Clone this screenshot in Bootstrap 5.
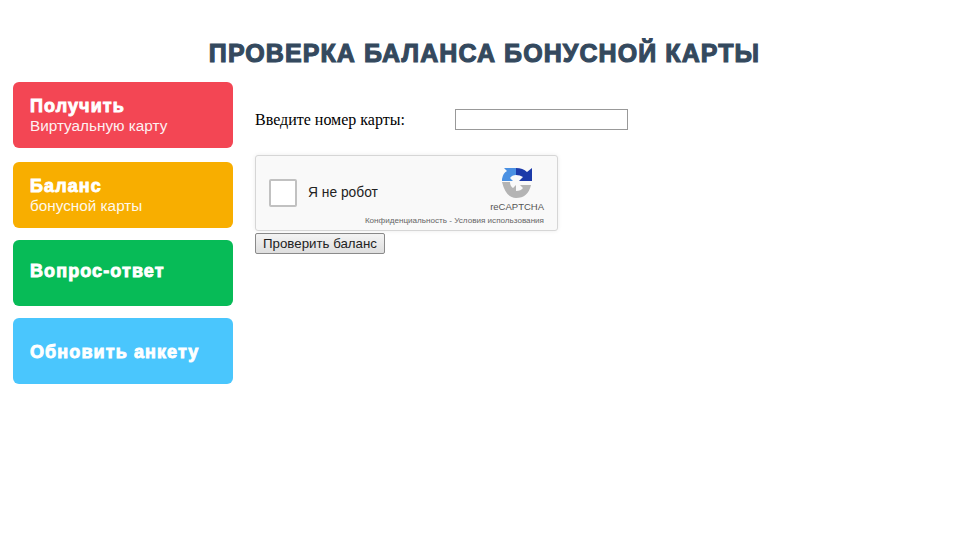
<!DOCTYPE html>
<html lang="ru"><head><meta charset="utf-8"><title>Проверка баланса</title>
<link href="https://cdn.jsdelivr.net/npm/bootstrap@5.3.0/dist/css/bootstrap.min.css" rel="stylesheet">
<style>
body{background:#fff;font-family:"Liberation Serif",serif;color:#000;overflow:hidden}
.page-wrap{padding:0 0 0 13px;height:553px}
.page-title{font-family:"Liberation Sans",sans-serif;font-weight:700;font-size:25px;line-height:28px;letter-spacing:1.08px;color:#34495e;-webkit-text-stroke:1.1px #34495e;text-align:center;margin:0;padding:39px 0 15px;width:943px}
.side-col{width:220px;flex:none}
.side-tile{display:flex;flex-direction:column;justify-content:center;height:66px;border-radius:6px;padding:0 17px;color:#fff;text-decoration:none;font-family:"Liberation Sans",sans-serif}
.side-tile b{font-size:18px;line-height:20px;font-weight:700;-webkit-text-stroke:.9px #fff;letter-spacing:1.1px;position:relative;top:1px}
.side-tile span{font-size:15.3px;line-height:20px;opacity:.92;position:relative;top:1px}
.tile-red{background:#f34654}.tile-amber{background:#f8ae00;margin-top:14px}.tile-green{background:#07bb57;margin-top:12px}.tile-blue{background:#4ac6fd;margin-top:12px}
.tile-green b{top:-2px}.tile-blue b{top:1px}
.form-col{padding:27px 0 0 22px}
.card-row{height:21px}
.card-label{width:200px;font-size:16px}
.card-input{width:173px;height:21px;border:1px solid #999;padding:0 2px;background:#fff;border-radius:0}
.captcha-box{width:303px;height:76px;margin-top:25px;background:#f9f9f9;border:1px solid #d6d6d6;border-radius:3px;box-shadow:0 0 4px rgba(0,0,0,.08);font-family:"Liberation Sans",sans-serif;padding:0 13px;position:relative}
.captcha-check{width:28px;height:28px;background:#fff;border:2px solid #c1c1c1;border-radius:2px;flex:none}
.captcha-text{font-size:13.8px;margin-left:11px;color:#222}
.captcha-brand{position:absolute;right:13px;top:11px;width:60px;display:flex;flex-direction:column;align-items:flex-end}
.captcha-brand svg{display:block;margin-right:11px}
.captcha-name{font-size:9.5px;line-height:12px;color:#555;margin-top:2px}
.captcha-links{position:absolute;right:13px;bottom:4px;font-size:8.1px;line-height:10px;color:#666;white-space:nowrap}
.check-btn{display:block;margin-top:2px;width:130px;height:21px;padding:0;font-family:"Liberation Sans",sans-serif;font-size:13.3px;line-height:19px;color:#222;background:linear-gradient(#f4f4f4,#dedede);border:1px solid #8a8a8a;border-radius:2px}
</style></head><body>
<div class="page-wrap">
<h1 class="page-title">ПРОВЕРКА БАЛАНСА БОНУСНОЙ КАРТЫ</h1>
<div class="d-flex">
<nav class="side-col">
<a class="side-tile tile-red" href="#"><b>Получить</b><span>Виртуальную карту</span></a>
<a class="side-tile tile-amber" href="#"><b>Баланс</b><span>бонусной карты</span></a>
<a class="side-tile tile-green" href="#"><b>Вопрос-ответ</b></a>
<a class="side-tile tile-blue" href="#"><b>Обновить анкету</b></a>
</nav>
<main class="form-col">
<form>
<div class="d-flex align-items-center card-row"><label class="card-label" for="cardNo">Введите номер карты:</label><input class="card-input" id="cardNo" type="text"></div>
<div class="captcha-box d-flex align-items-center">
<div class="captcha-check"></div><div class="captcha-text">Я не робот</div>
<div class="captcha-brand">
<svg width="32" height="32" viewBox="0 0 32 32">
<path d="M15 8 L15 1 Q22 1 26 5 L31 1 L31 14 L18 14 L22 10 Q19 8 15 8Z" fill="#1c3aa9"/>
<path d="M1 12 Q2 6 6 4 L3 1 L15 1 L15 8 Q11 8 9 11 L12 14 L1 14Z" fill="#4a90e2"/>
<path d="M1 15 L9 15 Q9 19 12 21 L15 18 L15 31 Q5 31 1 15Z M15 24 Q20 24 22 21 L19 18 L30 18 Q27 31 15 31Z" fill="#b4b4b4"/>
</svg>
<div class="captcha-name">reCAPTCHA</div></div>
<div class="captcha-links">Конфиденциальность - Условия использования</div>
</div>
<button class="check-btn" type="button">Проверить баланс</button>
</form>
</main>
</div>
</div>
<script src="https://cdn.jsdelivr.net/npm/bootstrap@5.3.0/dist/js/bootstrap.bundle.min.js"></script>
</body></html>
